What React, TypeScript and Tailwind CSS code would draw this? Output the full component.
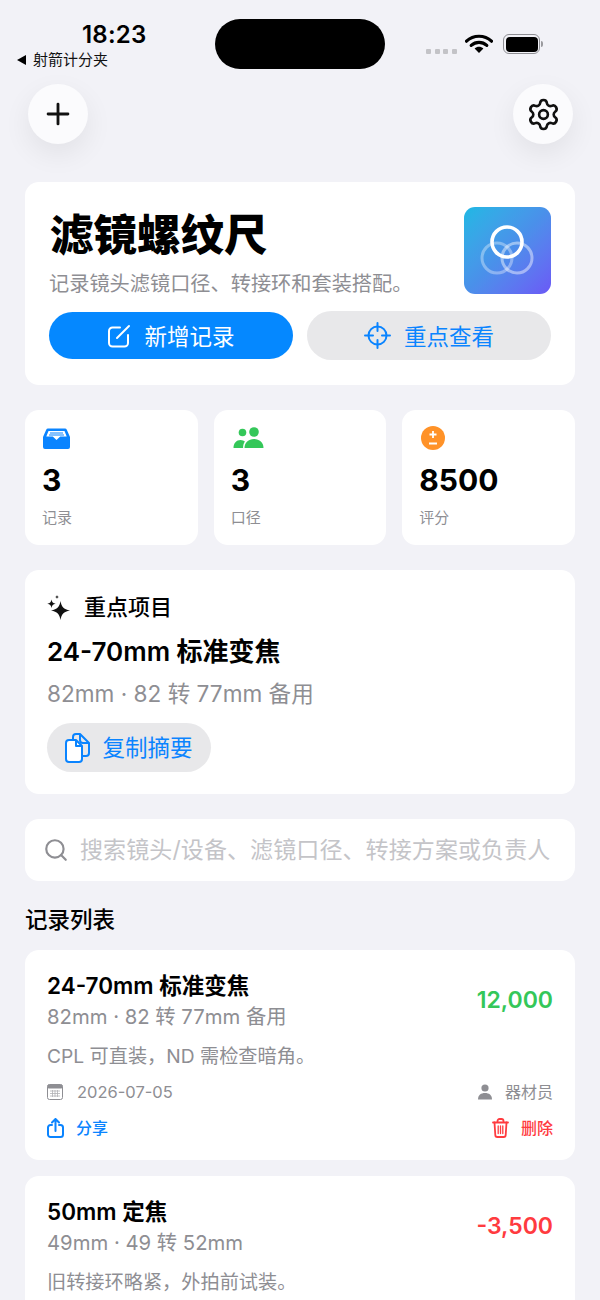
import { Plus, Settings, Search } from 'lucide-react'

const font = "font-['Inter','Noto_Sans_CJK_SC',sans-serif]"

function HeroLogo() {
  return (
    <div className="w-[87px] h-[87px] rounded-[11px] bg-gradient-to-br from-[#1cb8e4] via-[#4a90ea] to-[#6a58f6] shrink-0">
      <svg width="87" height="87" viewBox="0 0 87 87">
        <circle cx="33" cy="51" r="15" fill="none" stroke="white" strokeWidth="3" strokeOpacity="0.35" />
        <circle cx="53" cy="51" r="15" fill="none" stroke="white" strokeWidth="3" strokeOpacity="0.45" />
        <circle cx="43" cy="35" r="15" fill="none" stroke="white" strokeWidth="3.6" />
      </svg>
    </div>
  )
}

function ComposeIcon() {
  return (
    <svg width="24" height="24" viewBox="0 0 24 24" fill="none" stroke="white" strokeWidth="2" strokeLinecap="round">
      <path d="M13 3.500H5.500a3.500 3.500 0 0 0-3.500 3.500v12a3.500 3.500 0 0 0 3.500 3.500h12a3.500 3.500 0 0 0 3.500-3.500V11" />
      <path d="M10 14 22 2" />
    </svg>
  )
}

function TargetIcon() {
  return (
    <svg width="27" height="27" viewBox="0 0 27 27" fill="none" stroke="#0a84ff" strokeWidth="2" strokeLinecap="round">
      <circle cx="13.500" cy="13.500" r="9" />
      <path d="M13.500 1v8M13.500 18v8M1 13.500h8M18 13.500h8" />
    </svg>
  )
}

function DocsIcon() {
  return (
    <svg width="25" height="30" viewBox="0 0 25 30" fill="none" stroke="#0a84ff" strokeWidth="2" strokeLinejoin="round">
      <path d="M8 6V4a3 3 0 0 1 3-3h4l9 9v10a3 3 0 0 1-3 3h-3" />
      <path d="M15 1v6a3 3 0 0 0 3 3h6" />
      <path d="M4 7h7l6 6v13a3 3 0 0 1-3 3H4a3 3 0 0 1-3-3V10a3 3 0 0 1 3-3Z" fill="white" />
      <path d="M11 7v6h6" />
    </svg>
  )
}

function ShareIcon() {
  return (
    <svg width="17" height="20" viewBox="0 0 17 20" fill="none" stroke="#0a84ff" strokeWidth="2" strokeLinecap="round" strokeLinejoin="round">
      <path d="M5 7H3.500A2.500 2.500 0 0 0 1 9.500v7A2.500 2.500 0 0 0 3.500 19h10a2.500 2.500 0 0 0 2.500-2.500v-7A2.500 2.500 0 0 0 13.500 7H12" />
      <path d="M8.500 13V1.500M5 4.500l3.500-3.500L12 4.500" />
    </svg>
  )
}

function TrashIcon() {
  return (
    <svg width="17" height="20" viewBox="0 0 17 20" fill="none" stroke="#ff3b3f" strokeWidth="1.800" strokeLinecap="round" strokeLinejoin="round">
      <path d="M1 4.500h15M5.500 4.500V3a2 2 0 0 1 2-2h2a2 2 0 0 1 2 2v1.500" />
      <path d="M2.500 4.500 3.300 17a2 2 0 0 0 2 2h6.400a2 2 0 0 0 2-2l.8-12.500" />
      <path d="M6.200 8v7.500M8.500 8v7.500M10.800 8v7.500" strokeWidth="1.300" />
    </svg>
  )
}

function StatusBar() {
  return (
    <div className="h-[84px] relative">
      <div className="absolute left-[82px] top-[20px] text-[24px] leading-[29px] font-semibold text-black tracking-[0.2px]">18:23</div>
      <div className="absolute left-[17px] top-[51px] flex items-center gap-[7px] text-[15px] leading-[18px] text-[#111]">
        <span className="w-0 h-0 border-y-[5px] border-y-transparent border-r-[9px] border-r-black" />
        <span>射箭计分夹</span>
      </div>
      <div className="absolute left-[215px] top-[19px] w-[170px] h-[50px] rounded-full bg-black" />
      <div className="absolute left-[426px] top-[49px] flex gap-[3.500px]">
        <span className="w-[5px] h-[5px] rounded-[1px] bg-[#c3c3c7]" />
        <span className="w-[5px] h-[5px] rounded-[1px] bg-[#c3c3c7]" />
        <span className="w-[5px] h-[5px] rounded-[1px] bg-[#c3c3c7]" />
        <span className="w-[5px] h-[5px] rounded-[1px] bg-[#c3c3c7]" />
      </div>
      <svg className="absolute left-[465px] top-[34px]" width="28" height="20" viewBox="0 0 28 20">
        <path d="M1.500 7.200C8.500 .6 19.500 .6 26.500 7.200" fill="none" stroke="black" strokeWidth="3.200" strokeLinecap="round" />
        <path d="M6.200 11.400C10.700 7.400 17.300 7.400 21.800 11.400" fill="none" stroke="black" strokeWidth="3.200" strokeLinecap="round" />
        <path d="M9.600 14.400C12.200 12.200 15.800 12.200 18.400 14.400L14 19Z" fill="black" />
      </svg>
      <div className="absolute left-[503px] top-[34px] w-[37px] h-[20px] rounded-[6px] border-[1.500px] border-[#8e8e93] p-[1.500px]">
        <div className="w-full h-full rounded-[4px] bg-black" />
      </div>
      <div className="absolute left-[541px] top-[41px] w-[2px] h-[6px] rounded-r-[2px] bg-[#9a9a9e]" />
    </div>
  )
}

function HeaderButton({ children }: { children: React.ReactNode }) {
  return (
    <div className="w-[60px] h-[60px] rounded-full bg-[#fbfbfd] flex items-center justify-center shadow-[0_10px_28px_rgba(0,0,0,0.07)]">
      {children}
    </div>
  )
}

function Stat({ icon, value, label }: { icon: React.ReactNode; value: string; label: string }) {
  return (
    <div className="flex-1 h-[135px] bg-white rounded-[14px] pl-[17px] pt-[15px]">
      <div className="h-[26px] flex items-center pl-[1px]">{icon}</div>
      <div className="mt-[11px] text-[30px] leading-[36px] font-bold text-black">{value}</div>
      <div className="mt-[10px] text-[15px] leading-[20px] text-[#8e8e93]">{label}</div>
    </div>
  )
}

function RecordCard({ title, sub, note, amount, amountColor, full }: { title: string; sub: string; note: string; amount: string; amountColor: string; full?: boolean }) {
  return (
    <div className="bg-white rounded-[14px] px-[22px] pt-[21px] h-[210px] shrink-0">
      <div className="flex justify-between items-center">
        <div>
          <div className="text-[22.500px] leading-[29px] font-semibold text-black">{title}</div>
          <div className="mt-[3px] text-[20.300px] leading-[27px] text-[#8e8e93]">{sub}</div>
        </div>
        <div className={`text-[23px] font-semibold ${amountColor}`}>{amount}</div>
      </div>
      <div className="mt-[13px] text-[19.200px] leading-[27px] text-[#8e8e93]">{note}</div>
      {full && (
        <>
          <div className="mt-[10px] flex justify-between items-center h-[24px]">
            <div className="flex items-center gap-[14px] text-[16.500px] text-[#8e8e93]">
              <svg width="16" height="16" viewBox="0 0 16 16">
                <rect x="0.5" y="0.5" width="15" height="15" rx="2" fill="#fff" stroke="#8e8e93" />
                <rect x="0.5" y="0.5" width="15" height="4" rx="1.5" fill="#8e8e93" />
                <path d="M3 7h10M3 9.500h10M3 12h10M5.500 6v7M8 6v7M10.500 6v7" stroke="#b0b0b4" strokeWidth="0.8" />
              </svg>
              <span>2026-07-05</span>
            </div>
            <div className="flex items-center gap-[13px] text-[16px] text-[#8e8e93]">
              <svg width="14" height="16" viewBox="0 0 14 16" fill="#8e8e93">
                <circle cx="7" cy="4" r="3.600" />
                <path d="M0 15.500C0 11 3 9 7 9s7 2 7 6.500Z" />
              </svg>
              <span>器材员</span>
            </div>
          </div>
          <div className="mt-[12px] flex justify-between items-center h-[24px] text-[16px] font-medium">
            <div className="flex items-center gap-[12px] text-[#0a84ff]">
              <ShareIcon />
              <span>分享</span>
            </div>
            <div className="flex items-center gap-[12px] text-[#ff3b3f]">
              <TrashIcon />
              <span>删除</span>
            </div>
          </div>
        </>
      )}
    </div>
  )
}

export default function App() {
  return (
    <div className={`${font} w-[600px] h-[1300px] overflow-hidden bg-[#f2f2f7]`}>
      <StatusBar />
      <div className="flex justify-between pl-[28px] pr-[27px]">
        <HeaderButton><Plus size={34} strokeWidth={2} className="text-[#111]" /></HeaderButton>
        <HeaderButton><Settings size={35} strokeWidth={1.8} className="text-[#111]" /></HeaderButton>
      </div>

      <div className="px-[25px] mt-[38px] flex flex-col">
        <div className="bg-white rounded-[14px] h-[203px] pl-[24px] pr-[24px] pt-[25px]">
          <div className="flex justify-between">
            <div className="pl-[1px]">
              <div className="mt-[2px] text-[43.500px] leading-[52px] font-black text-black">滤镜螺纹尺</div>
              <div className="-ml-[1px] mt-[10px] text-[20.200px] leading-[26px] text-[#8e8e93]">记录镜头滤镜口径、转接环和套装搭配。</div>
            </div>
            <HeroLogo />
          </div>
          <div className="mt-[15px] flex gap-[14px]">
            <div className="flex-1 h-[47px] rounded-full bg-[#0588ff] flex items-center justify-center gap-[13px] text-white text-[22.500px]">
              <ComposeIcon />
              <span className="pt-[3px]">新增记录</span>
            </div>
            <div className="flex-1 h-[49px] -mt-[1px] rounded-full bg-[#e8e8ea] flex items-center justify-center gap-[13px] text-[#0a84ff] text-[22.500px]">
              <TargetIcon />
              <span className="pt-[3px]">重点查看</span>
            </div>
          </div>
        </div>

        <div className="mt-[25px] flex gap-[16px]">
          <Stat
            value="3"
            label="记录"
            icon={
              <svg width="27" height="21" viewBox="0 0 27 21">
                <path d="M5 0.500h17a2 2 0 0 1 1.800 1.200L27 9v10a2 2 0 0 1-2 2H2a2 2 0 0 1-2-2V9L3.200 1.700A2 2 0 0 1 5 0.500Z" fill="#0a84ff" />
                <path d="M5.500 3h16l2.200 5.500h-6.500l-3.700 3.500-3.700-3.500H3.300Z" fill="white" />
                <path d="M7 5h13M6 7h15" stroke="#0a84ff" strokeWidth="1" />
              </svg>
            }
          />
          <Stat
            value="3"
            label="口径"
            icon={
              <svg className="ml-[1px]" width="31" height="22" viewBox="0 0 30 22" fill="#34c759">
                <circle cx="9" cy="5.500" r="3.800" />
                <circle cx="20.500" cy="5" r="4.800" />
                <path d="M0 21c0-5 3-8 7-8 2 0 3.400 .8 4.400 1.600C10 16.400 9.600 18.600 9.600 21Z" />
                <path d="M11 21c0-5.500 4-9 9.500-9S30 15.500 30 21Z" />
              </svg>
            }
          />
          <Stat
            value="8500"
            label="评分"
            icon={
              <div className="ml-[1px] w-[24px] h-[24px] rounded-full bg-[#ff9228] flex items-center justify-center">
                <svg width="12" height="16" viewBox="0 0 12 16" stroke="white" strokeWidth="1.800">
                  <path d="M6 1v7M2.500 4.500h7M2 13.500h8" />
                </svg>
              </div>
            }
          />
        </div>

        <div className="mt-[25px] bg-white rounded-[14px] h-[224px] pl-[22px] pt-[23px]">
          <div className="flex items-center gap-[13px] h-[28px]">
            <svg width="24" height="27" viewBox="0 0 24 27" fill="#111">
              <path d="M13.500 7c1 6 3 8 9.500 9.500-6.500 1.500-8.500 3.500-9.500 9.500-1-6-3-8-9.500-9.500 6.500-1.500 8.500-3.500 9.500-9.500Z" />
              <path d="M4.500 5.500c.5 2.800 1.400 3.700 4.200 4.200-2.800 .5-3.700 1.400-4.200 4.200C4 11.100 3.100 10.200 .3 9.700 3.100 9.200 4 8.300 4.500 5.500Z" />
              <path d="M10 1c.25 1.300 .7 1.750 2 2-1.300 .25-1.750 .7-2 2-.25-1.300-.7-1.750-2-2 1.300-.25 1.750-.7 2-2Z" />
            </svg>
            <span className="text-[22px] font-medium text-black">重点项目</span>
          </div>
          <div className="mt-[14px] text-[26px] leading-[34px] font-semibold text-black">24-70mm 标准变焦</div>
          <div className="mt-[10px] text-[22.600px] leading-[30px] text-[#8e8e93]">82mm · 82 转 77mm 备用</div>
          <div className="mt-[14px] w-[164px] h-[49px] rounded-full bg-[#e8e8ea] flex items-center justify-center gap-[12px] text-[#0a84ff] text-[22.500px]">
            <DocsIcon />
            <span>复制摘要</span>
          </div>
        </div>

        <div className="mt-[25px] bg-white rounded-[14px] h-[62px] pl-[18px] flex items-center gap-[11px]">
          <Search size={26} strokeWidth={2} className="text-[#8e8e93]" />
          <span className="text-[23px] text-[#c4c4c8] whitespace-nowrap tracking-[0.1px]">搜索镜头/设备、滤镜口径、转接方案或负责人</span>
        </div>

        <div className="mt-[24px] text-[22.500px] leading-[30px] font-medium text-black">记录列表</div>

        <div className="mt-[15px] flex flex-col gap-[16px]">
          <RecordCard full title="24-70mm 标准变焦" sub="82mm · 82 转 77mm 备用" note="CPL 可直装，ND 需检查暗角。" amount="12,000" amountColor="text-[#34c759]" />
          <RecordCard title="50mm 定焦" sub="49mm · 49 转 52mm" note="旧转接环略紧，外拍前试装。" amount="-3,500" amountColor="text-[#ff3b3f]" />
        </div>
      </div>
    </div>
  )
}
